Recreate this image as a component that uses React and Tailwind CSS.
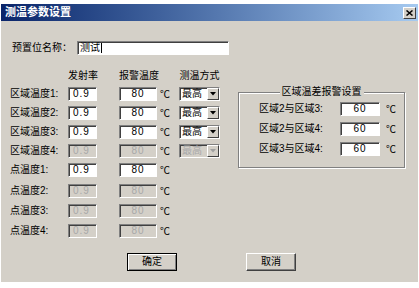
const FONT = "font-['Liberation_Sans','Noto_Sans_CJK_SC',sans-serif]";
const CJK = "font-['Noto_Sans_CJK_SC',sans-serif]";

const Field = ({ w, value, disabled, center }) => (
  <div
    className={`h-[14px] ${w} flex items-center border border-t-[#808080] border-l-[#808080] border-b-white border-r-white shadow-[inset_1px_1px_0_#404040] text-[10px] leading-none tracking-[1px] ${
      disabled ? 'bg-[#d4d0c8] text-[#a8a8a8]' : 'bg-white text-black'
    } ${center ? 'justify-center' : 'pl-[4px]'}`}
  >
    {value}
  </div>
);

const Select = ({ disabled }) => (
  <div
    className={`h-[14px] w-[41px] flex items-center border border-t-[#808080] border-l-[#808080] border-b-white border-r-white shadow-[inset_1px_1px_0_#404040] ${
      disabled ? 'bg-[#d4d0c8] text-[#a8a8a8]' : 'bg-white text-black'
    }`}
  >
    <span className="flex-1 pl-[2px] text-[10px] leading-none">最高</span>
    <div className="h-[12px] w-[12px] flex items-center justify-center bg-[#d4d0c8] border border-t-white border-l-white border-b-[#404040] border-r-[#404040]">
      <svg width="6" height="4" viewBox="0 0 6 4">
        <path d="M0 0h6L3 3.5z" fill={disabled ? '#a0a0a0' : '#000'} />
      </svg>
    </div>
  </div>
);

const zoneRows = [
  { label: '区域温度1:', sel: true },
  { label: '区域温度2:', sel: true },
  { label: '区域温度3:', sel: true },
  { label: '区域温度4:', sel: true, disabled: true },
  { label: '点温度1:' },
];

const pointRows = [
  { label: '点温度2:', disabled: true },
  { label: '点温度3:', disabled: true },
  { label: '点温度4:', disabled: true },
];

const Row = ({ row, h }) => (
  <div className={`flex items-center ${h}`}>
    <span className="w-[58px] text-[10px] leading-none">{row.label}</span>
    <Field w="w-[29px]" value="0.9" disabled={row.disabled} />
    <div className="w-[22px]" />
    <Field w="w-[38px]" value="80" disabled={row.disabled} center />
    <span className={`w-[22px] pl-[3px] text-[10px] leading-none ${CJK}`}>℃</span>
    {row.sel && <Select disabled={row.disabled} />}
  </div>
);

const Button = ({ label, primary }) => (
  <div
    className={`h-[18px] w-[50px] flex items-center justify-center bg-[#d4d0c8] text-[10px] leading-none ${
      primary
        ? 'border border-black shadow-[inset_1px_1px_0_#fff,inset_-1px_-1px_0_#808080]'
        : 'border border-t-white border-l-white border-b-[#404040] border-r-[#404040] shadow-[inset_-1px_-1px_0_#808080]'
    }`}
  >
    {label}
  </div>
);

export default function App() {
  return (
    <div className={`w-[419px] h-[288px] bg-white pt-[4px] pl-[1px] ${FONT} text-black`}>
      <div className="w-[417px] h-[278px] bg-[#d4d0c8] flex flex-col">
        {/* title bar */}
        <div className="h-[17px] flex items-center justify-between bg-gradient-to-r from-[#0a246a] to-[#a6caf0] pl-[4px] pr-[2px]">
          <span className="text-[11px] font-bold text-white leading-none">测温参数设置</span>
          <div className="h-[12px] w-[13px] flex items-center justify-center bg-[#d4d0c8] border border-t-white border-l-white border-b-[#404040] border-r-[#404040]">
            <svg width="7" height="6" viewBox="0 0 7 6">
              <path d="M0.5 0.5l6 5M6.5 0.5l-6 5" stroke="#000" strokeWidth="1.5" />
            </svg>
          </div>
        </div>

        <div className="pl-[9px] pt-[20px] flex flex-col">
          {/* name */}
          <div className="flex items-center h-[14px]">
            <span className="w-[67px] pl-[2px] text-[10px] leading-none">预置位名称：</span>
            <div className="h-[14px] w-[152px] flex items-center pl-[2px] bg-white border border-t-[#808080] border-l-[#808080] border-b-white border-r-white shadow-[inset_1px_1px_0_#404040] text-[10px] leading-none">
              测试<span className="ml-[1px] h-[10px] w-px bg-black" />
            </div>
          </div>

          <div className="flex mt-[14px]">
            {/* left table */}
            <div className="flex flex-col">
              <div className="flex items-center h-[14px] text-[10px] leading-none">
                <span className="w-[58px]" />
                <span className="w-[29px] text-center whitespace-nowrap">发射率</span>
                <span className="w-[22px]" />
                <span className="w-[38px] text-center whitespace-nowrap">报警温度</span>
                <span className="w-[22px]" />
                <span className="w-[41px] text-center whitespace-nowrap">测温方式</span>
              </div>
              <div className="flex flex-col mt-[1px]">
                {zoneRows.map((r) => (
                  <Row key={r.label} row={r} h="h-[19px]" />
                ))}
              </div>
              <div className="flex flex-col mt-[2px]">
                {pointRows.map((r) => (
                  <Row key={r.label} row={r} h="h-[20px]" />
                ))}
              </div>
            </div>

            {/* right group */}
            <div className="relative ml-[18px] mt-[23px] h-[76px] w-[167px] border border-[#808080] shadow-[inset_1px_1px_0_#fff,1px_1px_0_#fff]">
              <span className="absolute left-1/2 top-[-6px] -translate-x-1/2 bg-[#d4d0c8] px-[2px] text-[10px] leading-none whitespace-nowrap">
                区域温差报警设置
              </span>
              <div className="flex flex-col pl-[20px] pt-[9px] gap-[6px]">
                {['区域2与区域3:', '区域2与区域4:', '区域3与区域4:'].map((l) => (
                  <div key={l} className="flex items-center h-[14px]">
                    <span className="w-[81px] text-[10px] leading-none">{l}</span>
                    <Field w="w-[40px]" value="60" center />
                    <span className={`pl-[6px] text-[10px] leading-none ${CJK}`}>℃</span>
                  </div>
                ))}
              </div>
            </div>
          </div>
        </div>

        {/* buttons */}
        <div className="flex mt-[12px] pl-[126px] gap-[69px]">
          <Button label="确定" primary />
          <Button label="取消" />
        </div>
      </div>
    </div>
  );
}
